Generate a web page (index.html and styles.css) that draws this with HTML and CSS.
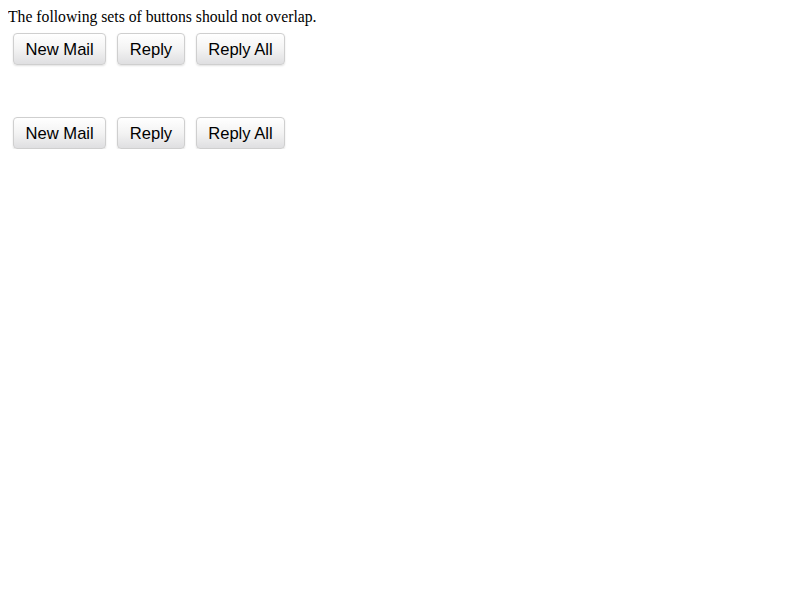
FILE: index.html
```html
<!DOCTYPE html>
<html>
<head>
<meta charset="utf-8">
<link rel="stylesheet" href="styles.css">
</head>
<body>
<p class="intro">The following sets of buttons should not overlap.</p>
<div class="set">
  <button class="btn">New Mail</button>
  <button class="btn">Reply</button>
  <button class="btn">Reply All</button>
</div>
<div class="set set-second">
  <button class="btn">New Mail</button>
  <button class="btn">Reply</button>
  <button class="btn">Reply All</button>
</div>
</body>
</html>
```
FILE: styles.css
```css
body {
  margin: 8px;
  font-family: "Liberation Serif", serif;
  font-size: 15.7px;
  background: #fff;
  color: #000;
}
.intro {
  margin: 0;
  line-height: 18px;
}
.set {
  display: flex;
  gap: 11px;
  margin: 7px 0 0 5px;
}
.set-second {
  margin-top: 52px;
}
.btn {
  box-sizing: border-box;
  height: 32px;
  padding: 2px 11.5px 0;
  font-family: "Liberation Sans", Arial, sans-serif;
  font-size: 16.6px;
  color: #000;
  border: 1px solid #cfcfcf;
  border-radius: 4px;
  background: linear-gradient(to bottom, #ffffff 0%, #f3f3f3 50%, #dfdfe1 100%);
  box-shadow: 0 1px 2px rgba(0, 0, 0, 0.12);
}
```
